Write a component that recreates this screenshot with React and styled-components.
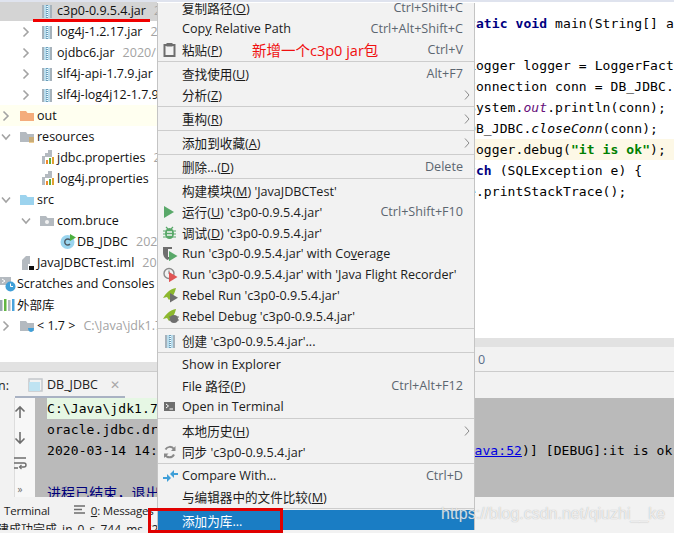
import React from 'react';
import styled, { createGlobalStyle } from 'styled-components';

const GlobalStyle = createGlobalStyle`
  html, body { margin: 0; padding: 0; background: #fff; }
  * { box-sizing: border-box; }
`;

const uiFont = `"Open Sans", "Noto Sans CJK SC", sans-serif`;
const monoFont = `"DejaVu Sans Mono", "Noto Sans CJK SC", monospace`;

const Page = styled.div`
  position: relative;
  width: 674px;
  height: 533px;
  overflow: hidden;
  background: #fff;
  display: flex;
  flex-direction: column;
  font-family: ${uiFont};
`;

const TopStrip = styled.div`
  position: absolute;
  left: 0;
  right: 0;
  top: 0;
  height: 2px;
  background: #dfe3ee;
`;

const Workspace = styled.div`
  display: flex;
  height: 372px;
  flex: none;
  border-bottom: 1px solid #cccccc;
`;

const ProjectPane = styled.div`
  width: 157px;
  flex: none;
  display: flex;
  flex-direction: column;
`;

const Tree = styled.div`
  flex: 1;
  overflow: hidden;
`;

const PaneFooter = styled.div`
  height: 9px;
  flex: none;
  background: #e2e2e2;
`;

const TreeRow = styled.div`
  display: flex;
  align-items: center;
  height: 21px;
  padding-left: ${p => p.$indent || 0}px;
  white-space: nowrap;
  font-size: 12.5px;
  color: #111;
  background: ${p => (p.$selected ? '#d4d4d4' : p.$caret ? '#fffff0' : 'transparent')};
`;

const ChevronSlot = styled.span`
  width: 20px;
  flex: none;
  display: flex;
  align-items: center;
  padding-left: ${p => (p.$down ? 0 : 2)}px;
`;

const IconSlot = styled.span`
  width: 17px;
  flex: none;
  display: flex;
  align-items: center;
`;

const Meta = styled.span`
  margin-left: 8px;
  color: #a3a3a3;
`;

const EditorPane = styled.div`
  flex: 1;
  min-width: 0;
  display: flex;
  flex-direction: column;
`;

const Editor = styled.div`
  flex: 1;
  overflow: hidden;
  padding-top: 13px;
`;

const CodeLine = styled.div`
  height: 21px;
  line-height: 21px;
  padding-left: 216px;
  white-space: pre;
  font-family: ${monoFont};
  font-size: 13px;
  letter-spacing: 0.09px;
  color: #000;
  background: ${p => (p.$current ? '#fdf8e6' : 'transparent')};
`;

const Keyword = styled.span`
  color: #000080;
  font-weight: 700;
`;

const StaticField = styled.span`
  color: #660e7a;
  font-style: italic;
`;

const Italic = styled.span`
  font-style: italic;
`;

const Str = styled.span`
  color: #008000;
  font-weight: 700;
`;

const EditorBand = styled.div`
  height: 9px;
  flex: none;
  background: #e2e2e2;
`;

const Crumbs = styled.div`
  height: 24px;
  flex: none;
  background: #f2f2f2;
  padding-left: 321px;
  font-size: 12.5px;
  line-height: 25px;
  color: #5a6f8a;
`;

const TabBar = styled.div`
  height: 26px;
  flex: none;
  background: #f2f2f2;
  display: flex;
  align-items: center;
  font-size: 12.5px;
  color: #222;
`;

const TabLabel = styled.span`
  width: 9px;
  margin-right: 6px;
  flex: none;
  overflow: hidden;
  display: flex;
  justify-content: flex-end;
`;

const Tab = styled.div`
  height: 26px;
  width: 110px;
  flex: none;
  display: flex;
  align-items: center;
  gap: 3px;
  padding: 1px 0 0 13px;
  border-bottom: 2px solid #a9b2c3;
`;

const TabClose = styled.span`
  margin-left: 9px;
  color: #a8a8a8;
  font-size: 12px;
`;

const RunPanel = styled.div`
  height: 99px;
  flex: none;
  display: flex;
`;

const ToolRail = styled.div`
  width: 15px;
  flex: none;
  background: #f2f2f2;
  border-right: 1px solid #dddddd;
`;

const RunTools = styled.div`
  width: 20px;
  flex: none;
  background: #f7f7f7;
  display: flex;
  flex-direction: column;
  align-items: flex-start;
  padding-top: 6px;
  gap: 8.5px;
`;

const ToolIcon = styled.span`
  width: 10px;
  height: 18px;
  display: flex;
  align-items: center;
  justify-content: center;
  color: #6e6e6e;
  font-size: 10px;
`;

const Console = styled.div`
  flex: 1;
  background: #bababa;
  font-family: ${monoFont};
  font-size: 13px;
  letter-spacing: 0.09px;
  color: #000;
  overflow: hidden;
`;

const ConsoleLine = styled.div`
  height: 21px;
  line-height: 22px;
  margin-left: 12px;
  white-space: pre;
  width: ${p => (p.$echo ? '120px' : 'auto')};
  font-size: ${p => (p.$big ? '14px' : 'inherit')};
  background: ${p => (p.$echo ? '#e6f7e4' : 'transparent')};
  color: ${p => p.$tone || '#000'};
`;

const ConsoleLink = styled.span`
  color: #0000e0;
  text-decoration: underline;
`;

const BottomBars = styled.div`
  height: 36px;
  flex: none;
  background: #f2f2f2;
  overflow: hidden;
  font-size: 11.5px;
  color: #222;
  border-bottom: 3px solid #f2f2f2;
`;

const ToolWindows = styled.div`
  height: 26px;
  display: flex;
  align-items: center;
  padding-left: 4px;
  letter-spacing: -0.2px;
`;

const ToolWindow = styled.span`
  display: flex;
  align-items: center;
  gap: 5px;
  margin-right: ${p => p.$gap || 0}px;
`;

const Mnemonic = styled.span`
  text-decoration: underline;
`;

const StatusText = styled.div`
  height: 7px;
  white-space: nowrap;
  line-height: 14px;
  font-size: 12px;
  word-spacing: 2px;
  margin-left: -15px;
  overflow: hidden;
`;

const StatusRule = styled.div`
  height: 1px;
  background: #8f8f8f;
`;

const Menu = styled.div`
  position: absolute;
  left: 157px;
  top: 3px;
  width: 318px;
  height: 527px;
  overflow: hidden;
  background: #f2f2f2;
  border: 1px solid #c4c4c4;
  border-width: 0 1px 0 1px;
  font-size: 12.6px;
  color: #1c1c1c;
`;

const MenuList = styled.div`
  margin-top: -6px;
`;

const MenuItem = styled.div`
  height: 21px;
  display: flex;
  align-items: center;
  padding: 0 11px 0 5px;
  white-space: nowrap;
  color: ${p => (p.$active ? '#fff' : 'inherit')};
  background: ${p => (p.$active ? '#1a7dc4' : 'transparent')};
`;

const MenuIcon = styled.span`
  width: 19px;
  flex: none;
  display: flex;
  align-items: center;
`;

const MenuText = styled.span`
  flex: 1;
`;

const Shortcut = styled.span`
  color: #5c6670;
`;

const SubArrow = styled.svg`
  width: 6px;
  height: 10px;
  margin-right: -7px;
`;

const MenuSep = styled.div`
  height: 3px;
  display: flex;
  align-items: center;
  &::after {
    content: '';
    flex: 1;
    height: 1px;
    background: #cdcdcd;
  }
`;

const Underline = styled.div`
  position: absolute;
  left: 33px;
  top: 19px;
  width: 117px;
  height: 3px;
  background: #f00000;
`;

const Note = styled.div`
  position: absolute;
  left: 252px;
  top: 41px;
  font-size: 14.5px;
  line-height: 20px;
  color: #f01010;
  white-space: nowrap;
`;

const RedBox = styled.div`
  position: absolute;
  left: 148px;
  top: 508px;
  width: 135px;
  height: 25px;
  border: 3px solid #e00000;
`;

const Watermark = styled.div`
  position: absolute;
  left: 441px;
  top: 503px;
  font-family: "Liberation Sans", sans-serif;
  font-size: 16px;
  line-height: 22px;
  color: rgba(255, 255, 255, 0.75);
  text-shadow: 0 0 1px rgba(120, 120, 120, 0.6);
  white-space: nowrap;
`;

/* ---- drawn icons ---- */

const Svg = ({ children, w = 14, h = 14 }) => (
  <svg width={w} height={h} viewBox={`0 0 ${w} ${h}`} style={{ display: 'block', flex: 'none' }}>{children}</svg>
);

const Chevron = ({ down }) => (
  down
    ? <Svg w={12} h={8}><path d="M2 1.5 L6 6 L10 1.5" fill="none" stroke="#a3a3a3" strokeWidth="1.6" /></Svg>
    : <Svg w={8} h={12}><path d="M1.5 1.5 L6 6 L1.5 10.5" fill="none" stroke="#a3a3a3" strokeWidth="1.6" /></Svg>
);

const JarIcon = () => (
  <Svg w={13} h={14}>
    <rect x="2" y="1" width="10" height="13" fill="#a6b2bb" />
    <rect x="4" y="1" width="6" height="13" fill="#b9dcec" />
    {[1, 3, 5, 7, 9, 11, 13].map(y => <rect key={y} x="6" y={y} width="2" height="1" fill="#6a9cb8" />)}
    {[2, 4, 6, 8, 10, 12].map(y => <rect key={y} x="7" y={y} width="1" height="1" fill="#fff" />)}
  </Svg>
);

const Folder = ({ color, children }) => (
  <Svg w={14} h={14}>
    <path d="M0 2 H6 L7.5 4 H14 V12 H0 Z" fill={color} />
    {children}
  </Svg>
);

const PropsIcon = () => (
  <Svg w={15} h={15}>
    <path d="M2 6 H5 V3 H8 V0 H12 V7 H5 V14 H2 Z" fill="#b4bac0" />
    <rect x="6" y="10" width="2" height="4" fill="#ef8a2a" />
    <rect x="9" y="8" width="2" height="6" fill="#5fae3a" />
    <rect x="12" y="7" width="2" height="7" fill="#e0a030" />
  </Svg>
);

const ClassIcon = () => (
  <Svg w={17} h={15}>
    <circle cx="7.5" cy="8" r="7" fill="#9ad5ef" />
    <path d="M10 6 A3 3 0 1 0 10 10" fill="none" stroke="#4d5a63" strokeWidth="1.4" />
    <path d="M10 0 L16 3.5 L10 7 Z" fill="#4caf3f" />
  </Svg>
);

const ImlIcon = () => (
  <Svg w={15} h={15}>
    <path d="M2 5 L6 1 H10 V15 H2 Z" fill="#b4bac0" />
    <rect x="8" y="9" width="6" height="6" fill="#fff" />
    <rect x="9" y="11" width="5" height="4" fill="#111" />
  </Svg>
);

const ScratchIcon = () => (
  <Svg w={16} h={16}>
    <rect x="0" y="1" width="11" height="8" fill="#b4bac0" />
    <path d="M2 3 L5 5 L2 7" fill="none" stroke="#fff" strokeWidth="1" />
    <circle cx="10.5" cy="10.5" r="5" fill="#3f9fd8" />
    <path d="M10.5 7.5 V10.5 H13" fill="none" stroke="#fff" strokeWidth="1" />
  </Svg>
);

const LibIcon = () => (
  <Svg w={16} h={14}>
    <rect x="0" y="2" width="2.5" height="11" fill="#9aa7b0" />
    <rect x="4" y="1" width="2.5" height="12" fill="#62b543" />
    <rect x="8" y="2" width="2.5" height="11" fill="#b4bac0" />
    <rect x="12" y="1" width="2.5" height="12" fill="#4aa3dc" />
  </Svg>
);

const TerminalIcon = () => (
  <Svg w={14} h={14}>
    <rect x="1" y="2" width="11" height="9" fill="#6e6e6e" />
    <path d="M3 4 L5.5 6 L3 8" fill="none" stroke="#fff" strokeWidth="1" />
    <path d="M6.5 9 H10" stroke="#fff" strokeWidth="1" />
  </Svg>
);

const Play = ({ color = '#59a869', x = 0, y = 0, size = 1 }) => (
  <path transform={`translate(${x} ${y}) scale(${size})`} d="M0 0 L10 6 L0 12 Z" fill={color} />
);

const menuIcons = {
  paste: (
    <Svg w={14} h={15}>
      <path d="M1.5 3 H11.5 V14 H1.5 Z" fill="none" stroke="#6e6e6e" strokeWidth="2" />
      <rect x="3.5" y="1" width="6" height="3.5" fill="#6e6e6e" />
    </Svg>
  ),
  run: <Svg w={14} h={14}><Play x={1} y={1} /></Svg>,
  debug: (
    <Svg w={14} h={14}>
      <ellipse cx="6.5" cy="7.5" rx="4.5" ry="5.5" fill="#59a869" />
      <path d="M0 5 H13 M0 8 H13 M0 11 H13 M3 1 L5 3 M10 1 L8 3" stroke="#59a869" strokeWidth="1.2" />
      <path d="M4 6 H9 M4 9 H9" stroke="#f2f2f2" strokeWidth="1.4" />
    </Svg>
  ),
  coverage: (
    <Svg w={15} h={15}>
      <path d="M0 1 H9 V7 C9 11 6 13 4.5 14 C3 13 0 11 0 7 Z" fill="#6e6e6e" />
      <path d="M5 3 H9 V11 H5 Z" fill="#f2f2f2" />
      <Play x={6} y={5} size={0.85} />
    </Svg>
  ),
  flight: (
    <Svg w={15} h={15}>
      <circle cx="6" cy="6.5" r="5" fill="none" stroke="#8a8a8a" strokeWidth="1.4" />
      <path d="M6 3.5 V6.5 L8 8" fill="none" stroke="#8a8a8a" strokeWidth="1.2" />
      <Play color="#e05555" x={6} y={5} size={0.85} />
    </Svg>
  ),
  rebelRun: (
    <Svg w={16} h={15}>
      <path d="M13 0 C7 1 3 5 0 10 L4 9 L6 12 C9 10 12 5 13 0 Z" fill="#8cb82e" />
      <Play color="#6e6e6e" x={7} y={5} size={0.8} />
    </Svg>
  ),
  rebelDebug: (
    <Svg w={16} h={15}>
      <path d="M13 0 C7 1 3 5 0 10 L4 9 L6 12 C9 10 12 5 13 0 Z" fill="#8cb82e" />
      <circle cx="11" cy="10" r="4" fill="#6e6e6e" />
      <path d="M6 8 H16 M6 11 H16" stroke="#6e6e6e" strokeWidth="1" />
    </Svg>
  ),
  jar: <JarIcon />,
  terminal: <TerminalIcon />,
  sync: (
    <Svg w={14} h={14}>
      <path d="M11 4 A5 5 0 0 0 2.5 4.5 M2 9.5 A5 5 0 0 0 11 9.5" fill="none" stroke="#8a8a8a" strokeWidth="2" />
      <path d="M12.5 1 V6 H8 Z M1 13 V8.5 H5.5 Z" fill="#8a8a8a" />
    </Svg>
  ),
  compare: (
    <Svg w={15} h={14}>
      <path d="M0 9 H5 M15 5 H10" stroke="#3f9fd8" strokeWidth="2" />
      <path d="M4 5 V13 L8 9 Z" fill="#3f9fd8" />
      <path d="M11 1 V9 L7 5 Z" fill="#3f9fd8" />
    </Svg>
  ),
};

/* ---- content ---- */

const JAR = "'c3p0-0.9.5.4.jar'";

const treeRows = [
  { indent: 20, chevron: 'hidden', icon: <JarIcon />, text: 'c3p0-0.9.5.4.jar', meta: '2020/1', selected: true },
  { indent: 20, chevron: 'right', icon: <JarIcon />, text: 'log4j-1.2.17.jar', meta: '2020/1' },
  { indent: 20, chevron: 'right', icon: <JarIcon />, text: 'ojdbc6.jar', meta: '2020/1' },
  { indent: 20, chevron: 'right', icon: <JarIcon />, text: 'slf4j-api-1.7.9.jar', meta: '2020' },
  { indent: 20, chevron: 'right', icon: <JarIcon />, text: 'slf4j-log4j12-1.7.9.jar' },
  { indent: 0, chevron: 'right', icon: <Folder color="#f4ac7c" />, text: 'out', caret: true },
  {
    indent: 0,
    chevron: 'down',
    icon: (
      <Folder color="#b4bac0">
        <path d="M9 8 H14 M9 10 H14 M9 12 H14" stroke="#e0a030" strokeWidth="1" />
      </Folder>
    ),
    text: 'resources',
  },
  { indent: 20, chevron: 'none', icon: <PropsIcon />, text: 'jdbc.properties', meta: '2020' },
  { indent: 20, chevron: 'none', icon: <PropsIcon />, text: 'log4j.properties', meta: '2020' },
  { indent: 0, chevron: 'down', icon: <Folder color="#9cd3ee" />, text: 'src' },
  {
    indent: 20,
    chevron: 'down',
    icon: (
      <Folder color="#b4bac0">
        <circle cx="7" cy="8" r="2" fill="#f2f2f2" />
      </Folder>
    ),
    text: 'com.bruce',
  },
  { indent: 40, chevron: 'none', icon: <ClassIcon />, text: 'DB_JDBC', meta: '2020' },
  { indent: 0, chevron: 'none', icon: <ImlIcon />, text: 'JavaJDBCTest.iml', meta: '2020' },
  { indent: 0, chevron: 'absent', icon: <ScratchIcon />, text: 'Scratches and Consoles' },
  { indent: 0, chevron: 'absent', icon: <LibIcon />, text: '外部库' },
  {
    indent: 0,
    chevron: 'right',
    icon: (
      <Folder color="#b4bac0">
        <path d="M8 9 H14 C14 12 12 13 11 13 C10 13 8 12 8 9 Z" fill="#3f9fd8" />
      </Folder>
    ),
    text: '< 1.7 >',
    meta: 'C:\\Java\\jdk1.7',
  },
];

const menuGroups = [
  [
    { label: '复制路径', key: 'O', shortcut: 'Ctrl+Shift+C' },
    { text: <>Cop<Mnemonic>y</Mnemonic> Relative Path</>, shortcut: 'Ctrl+Alt+Shift+C' },
    { label: '粘贴', key: 'P', icon: 'paste', shortcut: 'Ctrl+V' },
  ],
  [
    { label: '查找使用', key: 'U', shortcut: 'Alt+F7' },
    { label: '分析', key: 'Z', submenu: true },
  ],
  [{ label: '重构', key: 'R', submenu: true }],
  [{ label: '添加到收藏', key: 'A', submenu: true }],
  [{ label: '删除...', key: 'D', shortcut: 'Delete' }],
  [
    { label: '构建模块', key: 'M', tail: " 'JavaJDBCTest'" },
    { label: '运行', key: 'U', tail: ` ${JAR}`, icon: 'run', shortcut: 'Ctrl+Shift+F10' },
    { label: '调试', key: 'D', tail: ` ${JAR}`, icon: 'debug' },
    { text: <>Run {JAR} with Co<Mnemonic>v</Mnemonic>erage</>, icon: 'coverage' },
    { text: `Run ${JAR} with 'Java Flight Recorder'`, icon: 'flight' },
    { text: `Rebel Run ${JAR}`, icon: 'rebelRun' },
    { text: `Rebel Debug ${JAR}`, icon: 'rebelDebug' },
  ],
  [{ text: `创建 ${JAR}...`, icon: 'jar' }],
  [
    { text: 'Show in Explorer' },
    { label: 'File 路径', key: 'P', shortcut: 'Ctrl+Alt+F12' },
    { text: 'Open in Terminal', icon: 'terminal' },
  ],
  [
    { label: '本地历史', key: 'H', submenu: true },
    { text: `同步 ${JAR}`, icon: 'sync' },
  ],
  [
    { text: 'Compare With...', icon: 'compare', shortcut: 'Ctrl+D' },
    { label: '与编辑器中的文件比较', key: 'M' },
  ],
  [{ text: '添加为库...', active: true }],
];

function TreeItem({ row }) {
  return (
    <TreeRow $indent={row.indent} $selected={row.selected} $caret={row.caret}>
      {row.chevron !== 'absent' && (
        <ChevronSlot $down={row.chevron === 'down'}>
          {row.chevron === 'right' && <Chevron />}
          {row.chevron === 'down' && <Chevron down />}
        </ChevronSlot>
      )}
      <IconSlot>{row.icon}</IconSlot>
      <span>{row.text}</span>
      {row.meta && <Meta>{row.meta}</Meta>}
    </TreeRow>
  );
}

function MenuEntry({ item }) {
  return (
    <MenuItem $active={item.active}>
      <MenuIcon>{item.icon && menuIcons[item.icon]}</MenuIcon>
      <MenuText>
        {item.text}
        {item.label && (
          <>
            {item.label}(<Mnemonic>{item.key}</Mnemonic>){item.tail}
          </>
        )}
      </MenuText>
      {item.shortcut && <Shortcut>{item.shortcut}</Shortcut>}
      {item.submenu && (
        <SubArrow viewBox="0 0 6 10">
          <path d="M1 0.5 L5 5 L1 9.5" fill="none" stroke="#8a8a8a" strokeWidth="1" />
        </SubArrow>
      )}
    </MenuItem>
  );
}

export default function App() {
  return (
    <Page>
      <GlobalStyle />
      <Workspace>
        <ProjectPane>
          <Tree>
            {treeRows.map(row => <TreeItem key={row.text} row={row} />)}
          </Tree>
          <PaneFooter />
        </ProjectPane>
        <EditorPane>
          <Editor>
            <CodeLine>    public <Keyword>static void</Keyword> main(String[] args) {'{'}</CodeLine>
            <CodeLine>{'        '}<Keyword>try</Keyword> {'{'}</CodeLine>
            <CodeLine>{'            '}Logger logger = LoggerFactory.getLogger();</CodeLine>
            <CodeLine>{'            '}Connection conn = DB_JDBC.getConn();</CodeLine>
            <CodeLine>{'            '}System.<StaticField>out</StaticField>.println(conn);</CodeLine>
            <CodeLine>{'            '}DB_JDBC.<Italic>closeConn</Italic>(conn);</CodeLine>
            <CodeLine $current>{'            '}logger.debug(<Str>"it is ok"</Str>);</CodeLine>
            <CodeLine>{'        '}{'} '}<Keyword>catch</Keyword> (SQLException e) {'{'}</CodeLine>
            <CodeLine>{'            '}e.printStackTrace();</CodeLine>
          </Editor>
          <EditorBand />
          <Crumbs>0</Crumbs>
        </EditorPane>
      </Workspace>
      <TabBar>
        <TabLabel>Run:</TabLabel>
        <Tab>
          <Svg w={16} h={14}>
            <rect x="1" y="1" width="13" height="12" fill="none" stroke="#c4c8cc" strokeWidth="1.5" />
            <rect x="1" y="4" width="11" height="9" fill="#bfe3f2" />
          </Svg>
          <span>DB_JDBC</span>
          <TabClose>✕</TabClose>
        </Tab>
      </TabBar>
      <RunPanel>
        <ToolRail />
        <RunTools>
          <ToolIcon>
            <Svg w={12} h={14}><path d="M6 13 V2 M1.5 6.5 L6 2 L10.5 6.5" fill="none" stroke="#6e6e6e" strokeWidth="1.6" /></Svg>
          </ToolIcon>
          <ToolIcon>
            <Svg w={12} h={14}><path d="M6 1 V12 M1.5 7.5 L6 12 L10.5 7.5" fill="none" stroke="#6e6e6e" strokeWidth="1.6" /></Svg>
          </ToolIcon>
          <ToolIcon>
            <Svg w={14} h={14}>
              <path d="M1 2 H13 M1 7 H11 A2 2 0 0 1 11 11 H7 M1 12 H5" fill="none" stroke="#6e6e6e" strokeWidth="1.4" />
              <path d="M8.5 9 L6.5 11 L8.5 13" fill="none" stroke="#6e6e6e" strokeWidth="1.2" />
            </Svg>
          </ToolIcon>
          <ToolIcon>»</ToolIcon>
        </RunTools>
        <Console>
          <ConsoleLine $echo>C:\Java\jdk1.7\bin\java.exe</ConsoleLine>
          <ConsoleLine>oracle.jdbc.driver.T4CConnection@1f2a3b</ConsoleLine>
          <ConsoleLine>2020-03-14 14:20:11,123 [main] [DB_JDBC.main(DB_JDBC.j<ConsoleLink>ava:52</ConsoleLink>)] [DEBUG]:it is ok</ConsoleLine>
          <ConsoleLine> </ConsoleLine>
          <ConsoleLine $big $tone="#00007a">进程已结束，退出代码 0</ConsoleLine>
        </Console>
      </RunPanel>
      <BottomBars>
        <ToolWindows>
          <ToolWindow $gap={24}>Terminal</ToolWindow>
          <ToolWindow>
            <Svg w={12} h={10}><path d="M0 1 H11 M0 4.5 H8 M0 8 H11" stroke="#6e6e6e" strokeWidth="1.4" /></Svg>
            <span><Mnemonic>0</Mnemonic>: Messages</span>
          </ToolWindow>
        </ToolWindows>
        <StatusText>构建成功完成 in 0 s 744 ms (2 minutes ago)</StatusText>
        <StatusRule />
      </BottomBars>
      <TopStrip />
      <Underline />
      <Menu>
        <MenuList>
          {menuGroups.map((group, i) => (
            <React.Fragment key={i}>
              {i > 0 && <MenuSep />}
              {group.map((item, j) => <MenuEntry key={j} item={item} />)}
            </React.Fragment>
          ))}
        </MenuList>
      </Menu>
      <Note>新增一个c3p0 jar包</Note>
      <RedBox />
      <Watermark>https://blog.csdn.net/qiuzhi__ke</Watermark>
    </Page>
  );
}
